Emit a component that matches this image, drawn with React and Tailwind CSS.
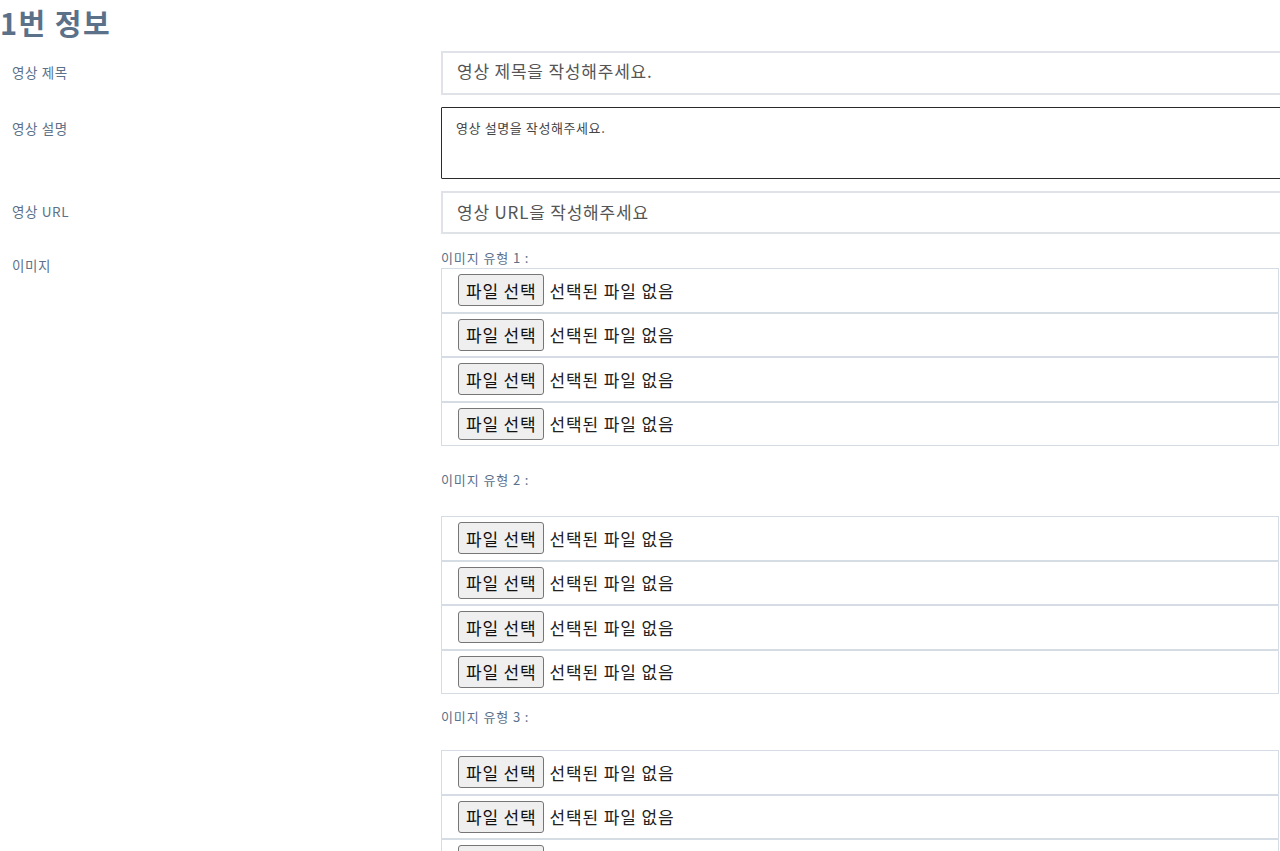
import React from "react";

const labelCls = "w-[441px] shrink-0 pl-3 text-[13.5px] tracking-[0.6px] text-[#5c7189]";

const FileRow = () => (
  <div className="flex h-[44.5px] items-center border border-[#d6dce3] px-4 bg-white">
    <span className="h-[32px] px-[7px] flex items-center border border-[#767676] rounded-[3px] bg-[#efefef] text-[17px] tracking-[0.8px] text-[#111] leading-none">
      파일 선택
    </span>
    <span className="ml-[5px] text-[17px] tracking-[0.9px] text-[#222] leading-none">선택된 파일 없음</span>
  </div>
);

const ImageGroup = ({ n, gap, rows }) => (
  <div>
    <div className="text-[13px] tracking-[0.9px] text-[#5c7189] leading-[16px] h-[16px]">이미지 유형 {n} :</div>
    <div className={gap}>
      {Array.from({ length: rows }).map((_, i) => (
        <FileRow key={i} />
      ))}
    </div>
  </div>
);

export default function App() {
  return (
    <div className="w-[1280px] h-[851px] overflow-hidden bg-white font-['Noto_Sans_CJK_KR','Noto_Sans',sans-serif]">
      <h2 className="pl-0 pt-[3px] text-[29px] tracking-[1.5px] font-bold leading-[38px] text-[#5b7089]">1번 정보</h2>

      <div className="mt-[10px] flex flex-col gap-[12px]">
        <div className="flex">
          <div className={`${labelCls} pt-[11px]`}>영상 제목</div>
          <div className="w-[860px] shrink-0 h-[44px] border-2 border-[#dfe3e8] flex items-center px-[14px] pb-[4px] text-[17px] tracking-[0.8px] text-[#555]">
            영상 제목을 작성해주세요.
          </div>
        </div>

        <div className="flex">
          <div className={`${labelCls} pt-[11px]`}>영상 설명</div>
          <div className="w-[860px] shrink-0 h-[72px] border border-[#2b2b2b] rounded-[1px] px-[14px] pt-[12px] text-[13px] tracking-[0.6px] leading-[16px] text-[#444]">
            영상 설명을 작성해주세요.
          </div>
        </div>

        <div className="flex">
          <div className={`${labelCls} pt-[10px]`}>영상 URL</div>
          <div className="w-[860px] shrink-0 h-[43px] border-2 border-[#dfe3e8] flex items-center px-[14px] pb-[2px] text-[17px] tracking-[0.8px] text-[#555]">
            영상 URL을 작성해주세요
          </div>
        </div>

        <div className="flex pt-[4px]">
          <div className={`${labelCls} pt-[5px]`}>이미지</div>
          <div className="w-[838px] shrink-0 flex flex-col">
            <ImageGroup n={1} gap="mt-[2px]" rows={4} />
            <div className="mt-[26px]">
              <ImageGroup n={2} gap="mt-[28px]" rows={4} />
            </div>
            <div className="mt-[15px]">
              <ImageGroup n={3} gap="mt-[25px]" rows={3} />
            </div>
          </div>
        </div>
      </div>
    </div>
  );
}
